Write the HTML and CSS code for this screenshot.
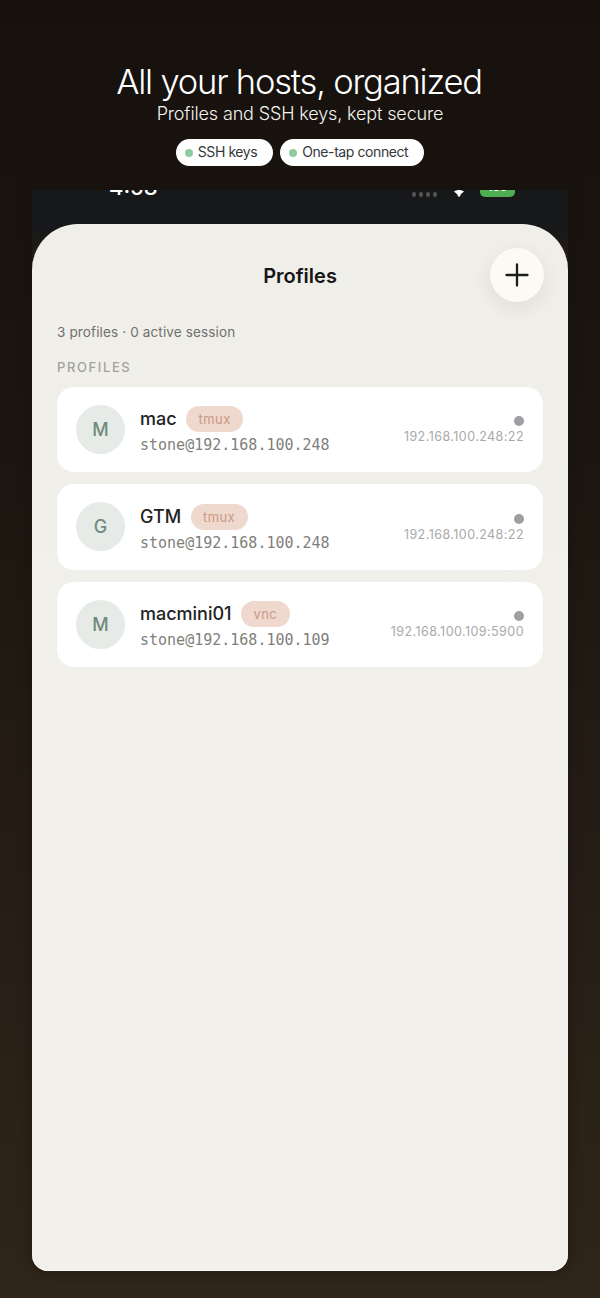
FILE: index.html
```html
<!DOCTYPE html>
<html lang="en">
<head>
<meta charset="utf-8">
<title>Profiles</title>
<link rel="stylesheet" href="styles.css">
</head>
<body>
<main class="poster">
  <header class="hero">
    <h1 class="hero-title">All your hosts, organized</h1>
    <p class="hero-sub">Profiles and SSH keys, kept secure</p>
    <div class="chips">
      <span class="chip"><i class="chip-dot"></i>SSH keys</span>
      <span class="chip"><i class="chip-dot"></i>One-tap connect</span>
    </div>
  </header>
  <section class="phone">
    <div class="statusbar">
      <span class="time">4:58</span>
      <div class="status-right">
        <span class="signal"><i></i><i></i><i></i><i></i></span>
        <svg class="wifi" width="10" height="8" viewBox="0 0 10 8"><path d="M0 1.500C3 -.5 7 -.5 10 1.500L6.500 4.500V5.500L5 7 3.500 5.500V4.500Z" fill="#fff"/></svg>
        <span class="battery">100</span>
      </div>
    </div>
    <div class="screen">
      <div class="topbar">
        <h2 class="screen-title">Profiles</h2>
        <button class="add" aria-label="Add profile">
          <svg width="24" height="24" viewBox="0 0 24 24"><path d="M12 1.500V22.500M1.500 12H22.500" stroke="#1c1c1c" stroke-width="2.300" stroke-linecap="round" fill="none"/></svg>
        </button>
      </div>
      <p class="summary">3 profiles · 0 active session</p>
      <h3 class="section-label">PROFILES</h3>
      <div class="list">
        <article class="card">
          <div class="avatar">M</div>
          <div class="info">
            <div class="name-row"><span class="name">mac</span><span class="tag">tmux</span></div>
            <div class="login">stone@192.168.100.248</div>
          </div>
          <div class="meta"><i class="state"></i><span class="addr">192.168.100.248:22</span></div>
        </article>
        <article class="card">
          <div class="avatar">G</div>
          <div class="info">
            <div class="name-row"><span class="name">GTM</span><span class="tag">tmux</span></div>
            <div class="login">stone@192.168.100.248</div>
          </div>
          <div class="meta"><i class="state"></i><span class="addr">192.168.100.248:22</span></div>
        </article>
        <article class="card">
          <div class="avatar">M</div>
          <div class="info">
            <div class="name-row"><span class="name">macmini01</span><span class="tag">vnc</span></div>
            <div class="login">stone@192.168.100.109</div>
          </div>
          <div class="meta"><i class="state"></i><span class="addr">192.168.100.109:5900</span></div>
        </article>
      </div>
    </div>
  </section>
</main>
</body>
</html>
```

FILE: styles.css
```css
* { box-sizing: border-box; }
html, body { margin: 0; padding: 0; }
body {
  width: 600px;
  height: 1298px;
  overflow: hidden;
  font-family: Inter, "Noto Sans", sans-serif;
  background: linear-gradient(180deg, #16110d 0%, #1c1610 35%, #2f251a 100%);
}
.poster {
  height: 1298px;
  display: flex;
  flex-direction: column;
  align-items: center;
  padding-top: 61px;
}
.hero { display: flex; flex-direction: column; align-items: center; }
.hero-title {
  margin: 0;
  padding-right: 2px;
  font-size: 34.500px;
  line-height: 42px;
  font-weight: 300;
  letter-spacing: -1.200px;
  color: #fff;
}
.hero-sub {
  margin: 0;
  font-size: 18px;
  line-height: 22px;
  font-weight: 300;
  letter-spacing: -0.140px;
  color: #f4f2ee;
}
.chips { display: flex; gap: 7px; margin-top: 14px; }
.chip {
  display: flex;
  align-items: center;
  height: 27px;
  padding: 0 16px 2px 9px;
  border-radius: 14px;
  background: #fff;
  font-size: 14px;
  letter-spacing: -0.420px;
  color: #33383a;
}
.chip-dot {
  width: 8px;
  height: 8px;
  border-radius: 50%;
  background: #8fcb9f;
  margin: 2px 5px 0 0;
}
.phone {
  width: 536px;
  margin-top: 24px;
  height: 1081px;
  display: flex;
  flex-direction: column;
  border-radius: 0 0 18px 18px;
  background: linear-gradient(180deg, #17181a 0, #17181a 40px, #221b13 60px);
  box-shadow: 0 0 12px rgba(20, 16, 12, .5);
}
.statusbar {
  height: 34px;
  overflow: hidden;
  display: flex;
  justify-content: space-between;
  align-items: flex-end;
  padding: 0 53px 0 77px;
}
.time {
  font-size: 22px;
  line-height: 22px;
  font-weight: 500;
  color: #fff;
  margin-bottom: 26px;
}
.status-right { display: flex; align-items: flex-start; height: 34px; }
.signal { display: flex; gap: 2.500px; margin-top: 2px; }
.signal i { width: 4.500px; height: 4.500px; border-radius: 50%; background: #555; }
.wifi { margin: 0 0 0 17px; }
.battery {
  width: 35px;
  height: 15px;
  margin: -8px 0 0 16px;
  border-radius: 5px;
  background: #4fae52;
  color: #fff;
  font-size: 11px;
  font-weight: 700;
  line-height: 10px;
  text-align: center;
}
.screen {
  height: 1047px;
  padding: 0 24px;
  border-radius: 46px 46px 16px 16px;
  background: linear-gradient(180deg, #efeee9 0, #f2f0ea 500px);
  box-shadow: inset 0 -1px 0 #faf8f1;
}
.topbar {
  position: relative;
  height: 93px;
  padding-top: 38px;
  display: flex;
  justify-content: center;
}
.screen-title {
  margin: 0;
  font-size: 20px;
  line-height: 28px;
  font-weight: 600;
  color: #161616;
}
.add {
  position: absolute;
  top: 24px;
  right: 0;
  width: 54px;
  height: 54px;
  padding: 0;
  display: flex;
  align-items: center;
  justify-content: center;
  border: 0;
  border-radius: 50%;
  background: #fbfaf3;
  box-shadow: 0 6px 20px rgba(40, 30, 20, .08);
}
.summary {
  margin: 0;
  padding-left: 1px;
  font-size: 13.500px;
  line-height: 30px;
  letter-spacing: .14px;
  color: #70706d;
}
.section-label {
  margin: 10px 0 0;
  padding-left: 1px;
  font-size: 13px;
  line-height: 20px;
  font-weight: 500;
  letter-spacing: 1.600px;
  color: #a3a19c;
}
.list { display: flex; flex-direction: column; gap: 10px; margin-top: 8.700px; }
.card {
  height: 87.500px;
  display: flex;
  align-items: center;
  padding: 0 19px 0 19px;
  border-radius: 18px;
  background: #fff;
  border: 1px solid #f0eee9;
}
.avatar {
  width: 49px;
  height: 49px;
  flex: none;
  display: flex;
  align-items: center;
  justify-content: center;
  border-radius: 50%;
  background: #e6ebe7;
  color: #6f8a7b;
  font-size: 18px;
  font-weight: 500;
}
.info { margin-left: 15px; flex: 1; padding-top: 4px; }
.name-row { display: flex; align-items: center; gap: 9.500px; }
.name {
  font-size: 18px;
  line-height: 26px;
  font-weight: 550;
  color: #222;
}
.tag {
  height: 26px;
  padding: 0 12.500px;
  border-radius: 13px;
  background: #efd8cd;
  color: #c99a88;
  font-size: 13px;
  line-height: 26px;
  letter-spacing: .4px;
}
.login {
  margin-top: 3px;
  font-family: "DejaVu Sans Mono", "Liberation Mono", monospace;
  font-size: 15px;
  line-height: 21px;
  color: #807f7b;
}
.meta { display: flex; flex-direction: column; align-items: flex-end; gap: 2px; padding-top: 4px; }
.state { width: 10px; height: 10px; border-radius: 50%; background: #9f9fa3; }
.addr {
  font-size: 12.500px;
  line-height: 18px;
  letter-spacing: .45px;
  color: #a9a9ac;
}
```
